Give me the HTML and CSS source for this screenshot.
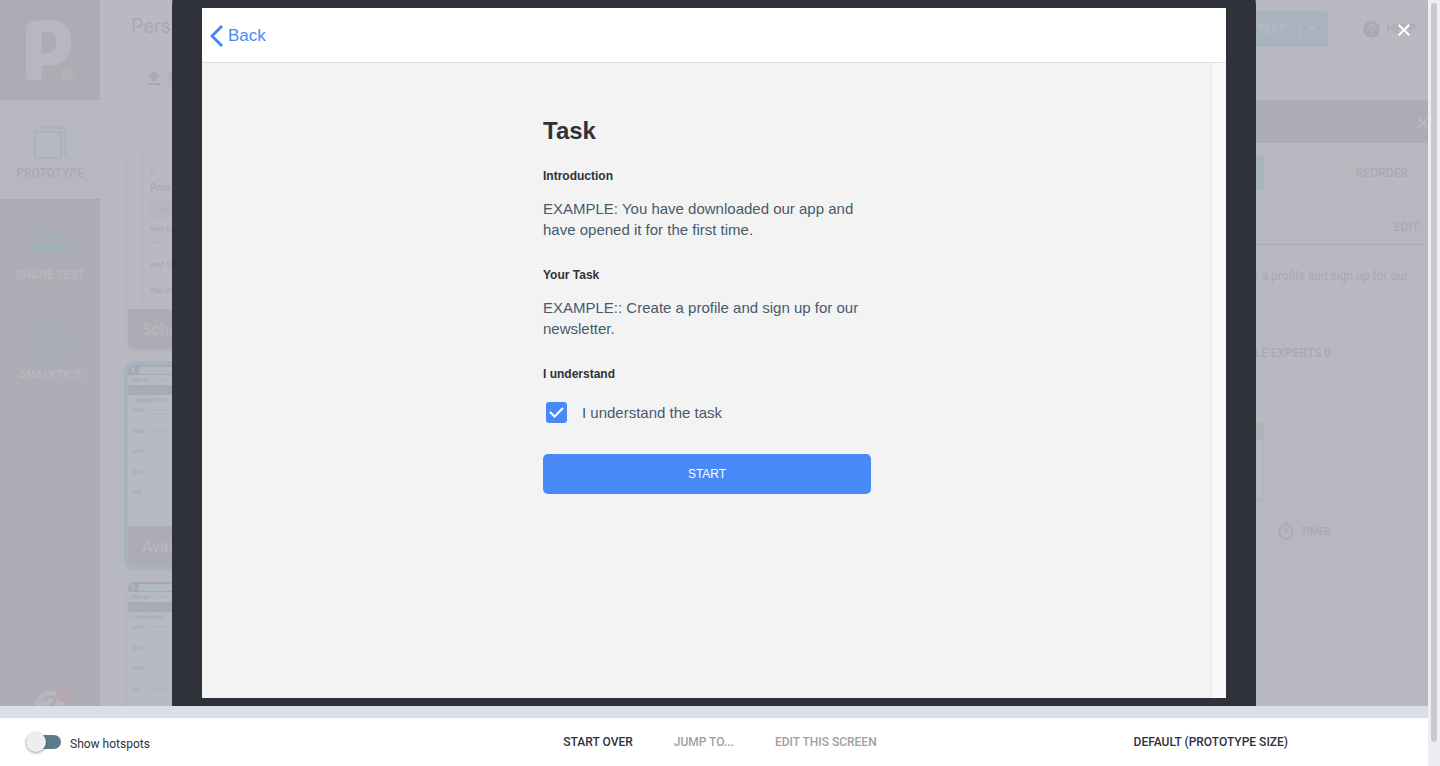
FILE: index.html
```html
<!DOCTYPE html>
<html lang="en">
<head>
<meta charset="utf-8">
<title>Prototype preview</title>
<link rel="stylesheet" href="styles.css">
</head>
<body>
<div class="page">
  <div class="workspace">
    <div class="stage">

      <div class="app">
        <nav class="sidebar">
          <div class="logo">
            <svg width="50" height="62" viewBox="0 0 50 62" role="img" aria-label="Logo">
              <path fill-rule="evenodd" fill="#b7b7c1" d="M1 10Q2 1 17 1H26C40 1 46 10 46 23C46 38 39 46 27 46H17V57Q17 61 13 61H5Q1 61 1 57ZM17 13V34Q20 35 23 34C29 33 31 29 31 23C31 16 28 13 23 13Z"/>
              <path fill="#b5b0b2" d="M36 61V54A6.500 6.500 0 1 1 42 61Z"/>
            </svg>
          </div>
          <a class="nav-item nav-item-active" href="#prototype">
            <svg width="32" height="32" viewBox="0 0 32 32" fill="none" stroke="#a7b3bf" stroke-width="2"><path d="M1 5h26v26H1zM4 1h27v27"/></svg>
            <span>PROTOTYPE</span>
          </a>
          <a class="nav-item" href="#share">
            <svg width="32" height="32" viewBox="0 -1 32 32" fill="#a4b1bd"><circle cx="11" cy="9" r="4.500"/><circle cx="22" cy="9" r="4.500"/><path d="M0 27v-4c0-4 6-6 10.500-6S21 19 21 23v4zM21 17c5 0 11 2 11 6v4h-9v-4c0-3-1-4-3-6z"/></svg>
            <span>SHARE TEST</span>
          </a>
          <a class="nav-item" href="#analytics">
            <svg width="32" height="32" viewBox="0 0 32 32" fill="none" stroke="#a4b1bd" stroke-width="2"><circle cx="16" cy="16" r="15"/><path d="M6 16a10.500 10.500 0 0 1 20 0M17 20l3-11"/><circle cx="16" cy="23" r="2.500"/></svg>
            <span>ANALYTICS</span>
          </a>
          <div class="sidebar-help">
            <svg width="40" height="19" viewBox="0 0 40 19" role="img" aria-label="Help"><circle cx="16" cy="19" r="15" fill="#b7b7bf"/><path d="M11 15c0-7 10-7 10-1 0 4-5 3-5 8" fill="none" stroke="#adadb5" stroke-width="3"/><circle cx="30" cy="8" r="7.500" fill="#b7a8b0"/></svg>
          </div>
        </nav>

        <main class="board">
          <header class="board-head">
            <h1>Pers</h1>
            <button class="upload" type="button">
              <svg width="12" height="14" viewBox="0 0 12 14" fill="#a9a9b2"><path d="M6 0l6 6H9v4H3V6H0zM0 12h12v2H0z"/></svg>
              <span>U</span>
            </button>
          </header>
          <div class="cards">
            <article class="card">
              <div class="card-view schedule">
                <svg width="5" height="5" viewBox="0 0 5 5" stroke="#a9a9b3"><path d="M0 0l5 5M5 0L0 5"/></svg>
                <strong class="schedule-title">Prov</strong>
                <span class="schedule-chip">3 requ</span>
                <strong>Your Up</strong>
                <span class="schedule-date">Date</span>
                <strong class="schedule-day">Wed 12</strong>
                <strong class="schedule-day">Thu 12/</strong>
              </div>
              <h2>Sche</h2>
            </article>
            <article class="card card-selected">
              <svg class="card-view" viewBox="0 0 160 161">
                <g id="list-thumb">
                  <rect width="160" height="161" fill="#b7b9c3"/>
                  <rect width="160" height="10" fill="#a5a9b5"/>
                  <path d="M4 2l3 2-1 4-3-3z" fill="#b3b6c1"/>
                  <rect x="11" y="2" width="149" height="7" fill="#b3bac4"/>
                  <rect x="14" y="4" width="20" height="2" fill="#afb7c1"/>
                  <text class="thumb-bold" x="3" y="17">Filter by</text>
                  <rect x="28" y="14" width="16" height="2" fill="#b2b4be"/>
                  <rect y="20" width="160" height="10" fill="#a6abb7"/>
                  <text class="thumb-light" x="4" y="27">Sort by</text>
                  <circle cx="3" cy="35" r="1" fill="#adafb9"/>
                  <text class="thumb-bold" x="7" y="37">Alphabet</text>
                  <rect x="26" y="33" width="12" height="4" rx="2" fill="#a8b4c3"/>
                  <g fill="#a8b4c3">
                    <rect x="4" y="43" width="12" height="4" rx="2"/>
                    <rect x="4" y="64" width="12" height="4" rx="2"/>
                    <rect x="4" y="84" width="12" height="4" rx="2"/>
                    <rect x="4" y="105" width="10" height="4" rx="2"/>
                    <rect x="4" y="125" width="10" height="4" rx="2"/>
                  </g>
                  <path d="M19 45h26M19 49h26M19 66h26M19 86h26M19 107h26M19 111h3M19 127h26M19 131h26" stroke="#b0b2bc" stroke-dasharray="7 1 5 1"/>
                  <path d="M4 56h11M24 56h18M4 77h11M24 77h18M4 97h11M24 97h18M4 118h11M24 118h18M4 138h11M24 138h18" stroke="#b3b5bf" stroke-dasharray="4 1"/>
                </g>
              </svg>
              <h2>Avai</h2>
            </article>
            <article class="card">
              <svg class="card-view" viewBox="0 0 160 161"><use href="#list-thumb"/></svg>
            </article>
          </div>
        </main>

        <aside class="panel">
          <div class="panel-top">
            <button class="test" type="button"><span>TEST</span><i></i><svg width="8" height="4" viewBox="0 0 8 4" fill="#b6b9c4"><path d="M0 0h8L4 4z"/></svg></button>
            <a class="help" href="#help">
              <svg width="17" height="17" viewBox="0 0 17 17"><circle cx="8.500" cy="8.500" r="8.500" fill="#a9a9b2"/><path d="M6 7c0-4 5.500-4 5.500-.5 0 2-3 2-3 4.500M8.500 12v2" fill="none" stroke="#b8b8c1" stroke-width="1.500"/></svg>
              <span>HELP</span>
            </a>
          </div>
          <div class="panel-bar"><svg width="11" height="12" viewBox="0 0 11 12" stroke="#bbbbc3" stroke-width="1.500"><path d="M1 1l10 10M11 1L1 11"/></svg></div>
          <div class="panel-actions"><span class="green-tab"></span><button type="button">REORDER</button></div>
          <div class="panel-edit"><button type="button">EDIT</button></div>
          <p class="panel-text">e a profile and sign up for our</p>
          <h3>LE EXPERTS 0</h3>
          <div class="screen-tile"></div>
          <button class="timer" type="button">
            <svg width="16" height="18" viewBox="0 0 16 18" fill="none" stroke="#a9a9b2" stroke-width="1.500"><circle cx="8" cy="10" r="6.800"/><path d="M5.500 1h5M8 6v5M13 4l1.500 1.500"/></svg>
            <span>TIMER</span>
          </button>
        </aside>
      </div>

      <section class="device">
        <div class="screen">
          <header class="screen-head">
            <a class="back" href="#back">
              <svg width="14" height="22" viewBox="0 0 14 22" fill="none" stroke="#4989f7" stroke-width="3"><path d="M12 1L2 11l10 10"/></svg>
              <span>Back</span>
            </a>
          </header>
          <div class="screen-body">
            <form class="task">
              <h2>Task</h2>
              <h3>Introduction</h3>
              <p>EXAMPLE: You have downloaded our app and have opened it for the first time.</p>
              <h3>Your Task</h3>
              <p>EXAMPLE:: Create a profile and sign up for our newsletter.</p>
              <h3>I understand</h3>
              <label class="agree" for="agree">
                <span class="check">
                  <input type="checkbox" id="agree" checked>
                  <svg width="15" height="11" viewBox="0 0 15 11" fill="none" stroke="#fff" stroke-width="2"><path d="M1 5l4.500 4.500L14 1"/></svg>
                </span>
                <span>I understand the task</span>
              </label>
              <button class="start" type="button">START</button>
            </form>
          </div>
        </div>
      </section>

      <button class="close" type="button" aria-label="Close">
        <svg width="12" height="12" viewBox="0 0 12 12" stroke="#fff" stroke-width="2"><path d="M.7.7l10.600 10.600M11.300.7L.7 11.300"/></svg>
      </button>
    </div>

    <footer class="toolbar">
      <label class="hotspots" for="hotspots"><input class="switch" type="checkbox" id="hotspots"><span>Show hotspots</span></label>
      <div class="toolbar-actions">
        <button type="button">START OVER</button>
        <button class="muted" type="button">JUMP TO...</button>
        <button class="muted" type="button">EDIT THIS SCREEN</button>
      </div>
      <button class="size" type="button">DEFAULT (PROTOTYPE SIZE)</button>
    </footer>
  </div>
  <div class="scrollbar"><div class="scroll-thumb"></div></div>
</div>
</body>
</html>
```

FILE: styles.css
```css
* { box-sizing: border-box; }
body { margin: 0; font-family: Roboto, sans-serif; font-size: 12px; color: #2f313b; }
h1, h2, h3, p { margin: 0; font-weight: 400; }
button { border: 0; padding: 0; background: none; color: inherit; font: inherit; font-weight: 500; cursor: pointer; }
a { color: inherit; text-decoration: none; }
svg { display: block; flex: none; }

.page { display: flex; height: 100vh; overflow: hidden; }
.workspace { flex: 1; min-width: 0; display: flex; flex-direction: column; }
.scrollbar { width: 12px; padding: 3px 3px 24px; background: #edeef4; }
.scroll-thumb { width: 6px; height: 100%; border-radius: 3px; background: #c8c9ce; }

.stage { flex: 1; min-height: 0; display: grid; grid-template: minmax(0, 1fr) / minmax(0, 1fr); overflow: hidden; background: #b8b8c1; }
.app, .device, .close { grid-area: 1 / 1; }

/* Dimmed editor behind the preview */
.app { display: grid; grid-template-columns: 100px 1fr 220px; min-height: 0; color: #a9a9b2; }
.sidebar { display: flex; flex-direction: column; background: #adadb5; color: #b8b8c0; min-height: 0; }
.logo { height: 100px; padding: 19px 25px; background: #acacb4; border-bottom: 1px solid #a8a8b1; }
.nav-item { height: 100px; display: flex; flex-direction: column; align-items: center; justify-content: center; gap: 11px; padding-top: 8px; line-height: 14px; font-weight: 500; border-bottom: 1px solid #a8a8b0; }
.nav-item-active { gap: 7px; background: #b7b7c0; color: #a9a9b2; }
.sidebar-help { margin-top: auto; padding-left: 34px; }

.board { display: flex; flex-direction: column; overflow: hidden; }
.board-head { flex: none; height: 100px; padding: 14px 30px 0 31px; background: #b9b9c2; border-bottom: 1px solid #b7b7c0; }
.board-head h1 { font-size: 20px; line-height: 24px; }
.upload { display: flex; align-items: center; gap: 9px; height: 34px; margin-top: 23px; padding: 0 17px; border-radius: 3px; background: #b8b8c1; }
.cards { display: flex; flex-direction: column; gap: 16px; padding: 48px 28px 0; }
.card { flex: none; width: 160px; border-radius: 6px; overflow: hidden; background: #b9b9c2; box-shadow: 0 1px 3px #b0b0b9; }
.card-selected { box-shadow: 0 0 0 4px #a8b3bf; }
.card-view { width: 160px; height: 161px; }
.card h2 { height: 40px; padding: 1px 14px 0; background: #acacb4; color: #b9b9c1; font-size: 16px; line-height: 40px; }
.schedule { display: flex; flex-direction: column; padding: 20px 10px 0 22px; font-size: 7px; line-height: 9px; color: #aaaab4; background: linear-gradient(90deg, #b9b9c2 14px, #b6b6bf 14px, #b6b6bf 16px, #b9b9c2 16px); }
.schedule-title { font-size: 10px; line-height: 12px; margin: 9px 0 7px; }
.schedule-chip { background: #b6b6bf; padding: 4px 6px; margin-bottom: 7px; font-size: 5px; }
.schedule-date { font-size: 5px; line-height: 9px; margin: 4px 0 5px; color: #b0b0b9; }
.schedule-day { margin: 9px 0 8px; }
.thumb-bold { font: 700 5px Roboto, sans-serif; fill: #a9abb6; }
.thumb-light { font: 400 4px Roboto, sans-serif; fill: #b3b7c2; }

.panel { display: flex; flex-direction: column; align-items: stretch; font-weight: 500; overflow: hidden; }
.panel-top { display: flex; justify-content: flex-end; align-items: flex-start; height: 100px; padding: 11px 12px 0 0; gap: 35px; background: #b9b9c2; }
.test { display: flex; align-items: center; gap: 8px; height: 36px; padding: 0 12px 0 16px; border-radius: 4px; background: #a9b2bf; color: #b7bac4; }
.test i { width: 1px; height: 20px; margin-left: 5px; background: #b3b8c3; }
.help { display: flex; align-items: center; gap: 7px; height: 36px; }
.panel-bar { display: flex; align-items: center; justify-content: flex-end; height: 43px; padding-top: 2px; background: #abacb4; }
.panel-actions { display: flex; align-items: center; justify-content: space-between; height: 60px; padding-right: 20px; }
.green-tab { width: 56px; height: 36px; border-radius: 4px; background: #a9b5b6; }
.panel-edit { display: flex; justify-content: flex-end; align-items: center; height: 42px; padding-top: 7px; border-bottom: 1px solid #adadb6; }
.panel-edit button { height: 24px; padding: 0 9px 0 6px; background: #b7b7c0; }
.panel-text { margin-top: 23px; padding-right: 20px; text-align: right; font-weight: 400; line-height: 16px; white-space: nowrap; }
.panel h3 { margin-top: 61px; padding-right: 97px; text-align: right; font-size: 12px; font-weight: 500; line-height: 16px; white-space: nowrap; }
.screen-tile { width: 56px; height: 79px; margin-top: 61px; border: 1px solid #a9b6b5; border-top: 18px solid #a9b6b5; border-radius: 5px 5px 0 0; background: #b4bac0; }
.timer { display: flex; align-items: center; align-self: flex-start; gap: 7px; height: 32px; margin: 14px 0 0 48px; padding: 0 16px 0 22px; background: #b7b7c0; font-size: 10px; }

/* Device preview */
.device { justify-self: center; width: 1084px; max-width: 100%; margin-top: -30px; padding: 38px 30px 8px; border-radius: 36px 36px 0 0; background: #2f323b; display: flex; min-height: 0; z-index: 1; }
.screen { flex: 1; display: flex; flex-direction: column; background: #f3f3f3; font-family: "Liberation Sans", Arial, sans-serif; }
.screen-head { display: flex; align-items: center; height: 55px; padding: 0 8px; background: #fff; border-bottom: 1px solid #dfdfdf; }
.back { display: flex; align-items: center; gap: 4px; padding-top: 1px; color: #4989f7; font-size: 17px; line-height: 20px; }
.screen-body { flex: 1; display: flex; justify-content: center; padding-top: 54px; border-right: 14px solid #fafafa; box-shadow: inset -1px 0 #e6e6e6; }
.task { width: 328px; display: flex; flex-direction: column; }
.task h2 { font-size: 24px; line-height: 28px; font-weight: 700; margin-bottom: 23px; }
.task h3 { font-size: 12px; line-height: 16px; font-weight: 700; margin-bottom: 14px; }
.task p { font-size: 15px; line-height: 21px; margin-bottom: 27px; color: #475a6c; }
.agree { display: flex; align-items: center; gap: 15px; margin: 6px 0 31px 2px; font-size: 15px; line-height: 21px; color: #475a6c; }
.check { display: grid; place-items: center; width: 22px; height: 21px; }
.check input, .check svg { grid-area: 1 / 1; }
.check input { appearance: none; width: 21px; height: 21px; margin: 0; border-radius: 3px; background: #4989f7; }
.check svg { z-index: 1; pointer-events: none; }
.start { height: 40px; border-radius: 5px; background: #4989f7; color: #fff; font-size: 12px; font-weight: 400; }
.close { justify-self: end; align-self: start; margin: 18px 12px 0 0; padding: 6px; z-index: 2; }

.toolbar { display: grid; grid-template-columns: 1fr auto 1fr; align-items: center; height: 60px; padding: 0 14px 0 26px; border-top: 12px solid #dcdee9; background: #fff; }
.hotspots { display: flex; align-items: center; gap: 9px; line-height: 16px; }
.hotspots span { padding-top: 3px; }
.switch { appearance: none; width: 35px; height: 14px; margin: 0; border-radius: 7px; background: #5f7c8a; display: flex; align-items: center; }
.switch::before { content: ""; width: 20px; height: 20px; flex: none; border-radius: 50%; background: #eceff1; box-shadow: 0 1px 3px rgba(0, 0, 0, .4); }
.toolbar-actions { display: flex; gap: 41px; }
.muted { color: #9fa0a3; }
.size { justify-self: end; margin-right: 126px; }
```
